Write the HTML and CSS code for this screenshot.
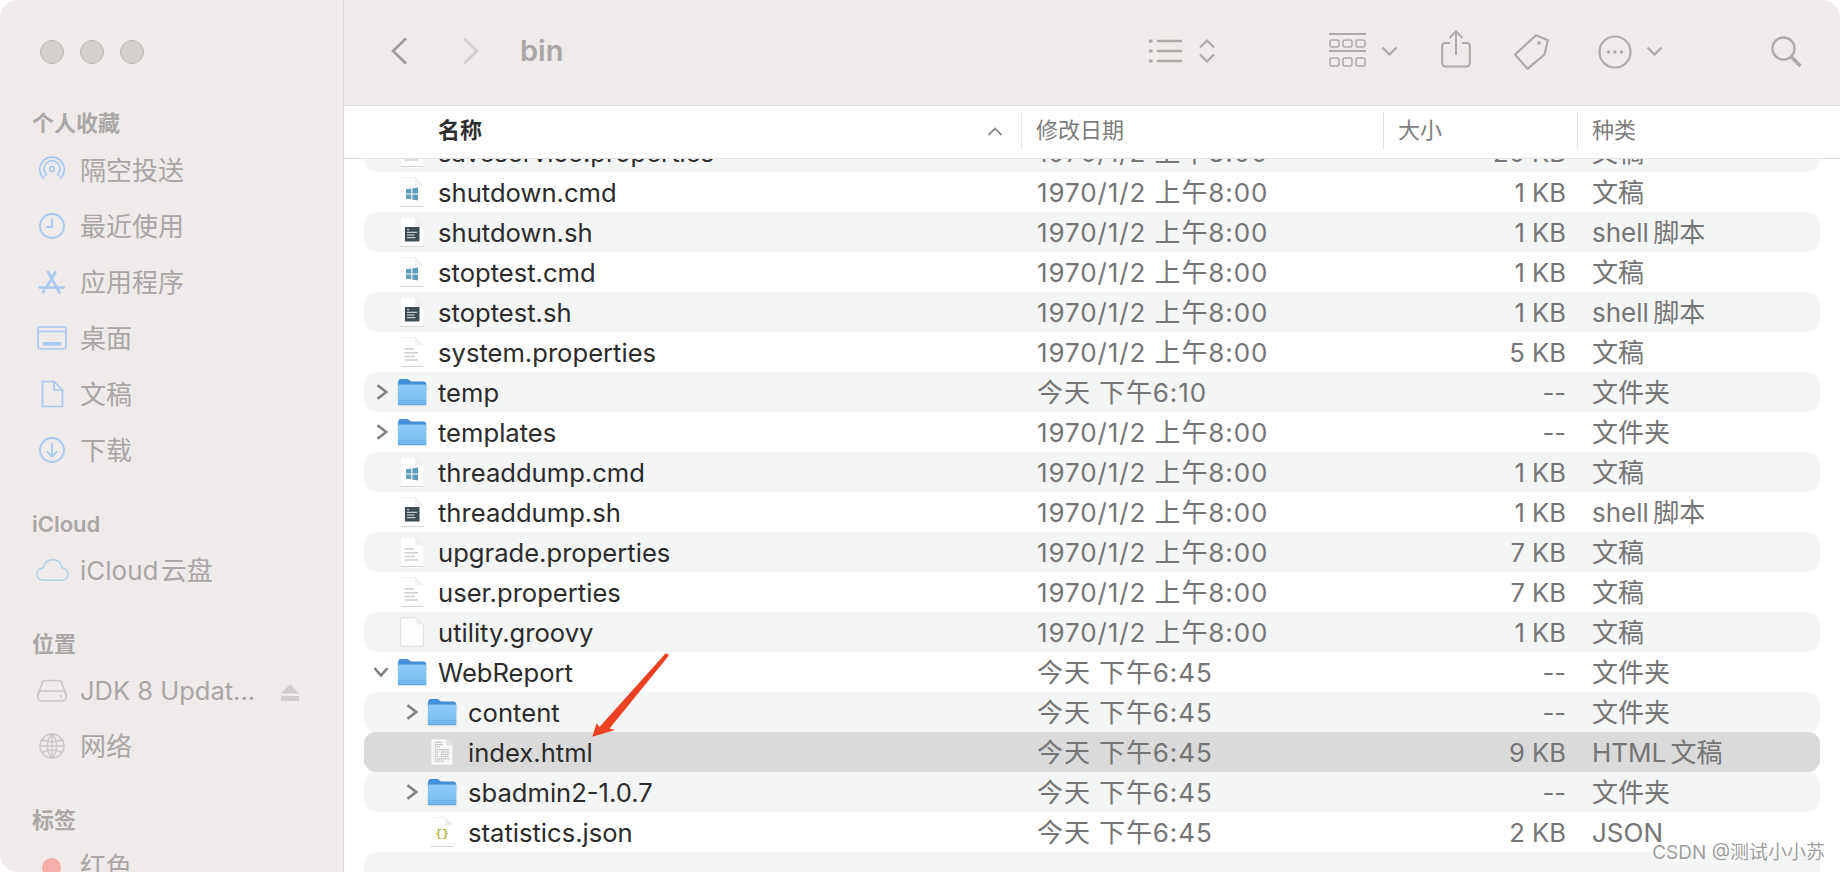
FILE: index.html
```html
<!DOCTYPE html>
<html lang="zh-CN">
<head>
<meta charset="utf-8">
<title>bin</title>
<link rel="stylesheet" href="styles.css">
</head>
<body>
<svg class="sprite" aria-hidden="true">
  <defs>
    <linearGradient id="fb" x1="0" y1="0" x2="0" y2="1">
      <stop offset="0" stop-color="#8ccbf6"/>
      <stop offset="1" stop-color="#74bcf0"/>
    </linearGradient>
    <symbol id="page" viewBox="0 0 24 30">
      <path d="M1 0.5H15L23 8.5V29H1Z" fill="#fff"/>
      <path d="M15 0.5L23 8.5H15Z" fill="#f1f1f1"/>
      <path d="M15 0.5L23 8.5" fill="none" stroke="#e2e2e2" stroke-width=".7"/>
      <path d="M0.5 29.5H23.5" stroke="#d6d6d6" stroke-width="1"/>
      <path d="M0.5 0.3H15" stroke="#e6e6e6" stroke-width=".6"/>
    </symbol>
    <symbol id="win" viewBox="0 0 24 30">
      <use href="#page"/>
      <path d="M6 12.200L11.300 11.400V16.400H6ZM12.400 11.200L18 10.400V16.400H12.400ZM6 17.500H11.300V22.400L6 21.600ZM12.400 17.500H18V23.400L12.400 22.600Z" fill="#5f9cba"/>
    </symbol>
    <symbol id="shell" viewBox="0 0 24 30">
      <use href="#page"/>
      <rect x="5" y="10" width="14.500" height="14.500" fill="#3f4d55"/>
      <path d="M7 12.700H9M7 15.300H17M7 18H14.500M7 20.700H15.500" stroke="#e6e9ea" stroke-width="1"/>
    </symbol>
    <symbol id="text" viewBox="0 0 24 30">
      <use href="#page"/>
      <path d="M4.500 12H14M4.500 15.700H18M4.500 19.400H15M4.500 23H18" stroke="#cfcfcf" stroke-width="1.500"/>
    </symbol>
    <symbol id="blank" viewBox="0 0 24 30">
      <path d="M.7 .7H16.500L23.300 7.500V29.300H.7Z" fill="#fdfdfd" stroke="#dedede" stroke-width="1"/>
      <path d="M16.500 .7L23.300 7.500H16.500Z" fill="#eee"/>
    </symbol>
    <symbol id="html" viewBox="0 0 26 30">
      <path d="M1 .7H17.500L25 8V29.300H1Z" fill="#f6f6f6" stroke="#d2d2d2" stroke-width=".8"/>
      <path d="M17.500 .7L25 8H17.500Z" fill="#e2e2e2"/>
      <path d="M5 4.500H13M5 7H14M5 9.500H11M5 12.500H21M5 15H10M12 15H21M5 17.500H9M12 17.500H21M5 20H10M12 20H20M5 22.500H21M5 25H15" stroke="#a8a8a8" stroke-width="1" stroke-dasharray="1.600 .5"/>
    </symbol>
    <symbol id="json" viewBox="0 0 24 30">
      <use href="#page"/>
      <text x="12" y="20" class="json-glyph" text-anchor="middle">{}</text>
    </symbol>
    <symbol id="folder" viewBox="0 0 30 28">
      <path d="M1 5.500C1 2.500 2 1 4 1H10.500C12 1 12.500 3.500 14.500 3.500H26.500C28 3.500 29.200 4.600 29.200 6.500V12H1Z" fill="#4290d8"/>
      <path d="M1 8.500C1 7 1.600 6.500 3 6.500H27C28.400 6.500 29.200 7 29.200 8.500V25C29.200 26.500 28.400 27 27 27H3C1.600 27 1 26.500 1 25Z" fill="url(#fb)"/>
      <path d="M1 22.500H29.200M1 24.500H29.200" stroke="#66aee4" stroke-width=".8"/>
      <path d="M1 26.500H29.200" stroke="#5b9fd6" stroke-width="1"/>
    </symbol>
    <symbol id="chev-r" viewBox="0 0 12 16"><path d="M1.500 1.200L10.300 8L1.500 14.800" fill="none" stroke="#808080" stroke-width="2.600"/></symbol>
    <symbol id="chev-d" viewBox="0 0 16 12"><path d="M1.500 2L8 9.500L14.500 2" fill="none" stroke="#808080" stroke-width="2.600"/></symbol>
    <symbol id="chev-tool" viewBox="0 0 17 10"><path d="M1.500 1.500L8.500 8.500L15.500 1.500" fill="none" stroke="#aeaaa9" stroke-width="2.400"/></symbol>
  </defs>
</svg>

<div class="window">
  <aside class="sidebar">
    <div class="lights"><span class="light"></span><span class="light"></span><span class="light"></span></div>

    <section class="group">
      <h2 class="group-title">个人收藏</h2>
      <div class="side-item">
        <svg class="side-ic" viewBox="0 0 30 30" fill="none" stroke="#a9c9f0" stroke-width="1.700"><circle cx="15" cy="14" r="2.400" stroke-width="1.500"/><path d="M9.500 19.500A8 8 0 1 1 20.500 19.500"/><path d="M7 23.500A12.200 12.200 0 1 1 23 23.500"/><path d="M9.500 19.500L8 21M20.500 19.500L22 21"/></svg>
        <span>隔空投送</span>
      </div>
      <div class="side-item">
        <svg class="side-ic" viewBox="0 0 30 30" fill="none" stroke="#a9c9f0" stroke-width="1.800"><circle cx="15" cy="15" r="12"/><path d="M15 7.500V16H9"/></svg>
        <span>最近使用</span>
      </div>
      <div class="side-item">
        <svg class="side-ic" viewBox="0 0 30 30" fill="none" stroke="#a9c9f0" stroke-width="2.600" stroke-linecap="round"><path d="M11 5L22.500 25.500M18.500 5L9 21M2.500 20.500H27M6 25.500L7 23.500"/></svg>
        <span>应用程序</span>
      </div>
      <div class="side-item">
        <svg class="side-ic" viewBox="0 0 30 30" fill="none" stroke="#a9c9f0" stroke-width="1.600"><rect x="1" y="4" width="28" height="22" rx="2.500"/><path d="M1 8.500H29"/><rect x="6" y="19" width="18" height="3.500" fill="#a9c9f0" stroke="none"/></svg>
        <span>桌面</span>
      </div>
      <div class="side-item">
        <svg class="side-ic" viewBox="0 0 30 30" fill="none" stroke="#a9c9f0" stroke-width="1.700"><path d="M5.500 2.500H17L25.500 11V27.500H5.500Z" stroke-linejoin="round"/><path d="M17 2.500V11H25.500"/></svg>
        <span>文稿</span>
      </div>
      <div class="side-item">
        <svg class="side-ic" viewBox="0 0 30 30" fill="none" stroke="#a9c9f0" stroke-width="1.800"><circle cx="15" cy="15" r="12"/><path d="M15 8V21M10 16.500L15 21.500L20 16.500"/></svg>
        <span>下载</span>
      </div>
    </section>

    <section class="group">
      <h2 class="group-title">iCloud</h2>
      <div class="side-item">
        <svg class="side-ic cloud" viewBox="0 0 34 24" fill="none" stroke="#add3e8" stroke-width="1.500"><path d="M8 22.500C3.500 22.500 1 19.700 1 16.500C1 13 3.500 10.500 7 10.300C8.500 5 12.500 1.500 17.500 1.500C22.500 1.500 25.800 5 26.800 9.500C30.500 10.500 33 13.200 33 16.500C33 20 30.500 22.500 26.500 22.500Z"/></svg>
        <span class="tight">iCloud 云盘</span>
      </div>
    </section>

    <section class="group">
      <h2 class="group-title">位置</h2>
      <div class="side-item">
        <svg class="side-ic" viewBox="0 0 30 30" fill="none" stroke="#cac7c6" stroke-width="1.600"><path d="M1 20L5 8C5.500 6.500 6.500 5.500 8 5.500H22C23.500 5.500 24.500 6.500 25 8L29 20"/><rect x="1" y="16" width="28" height="10" rx="3.500"/><circle cx="24" cy="21" r="1.200" fill="#cac7c6" stroke="none"/></svg>
        <span class="latin">JDK 8 Updat...</span>
        <svg class="eject" viewBox="0 0 18 18"><path d="M9 0L18 9.500H0Z" fill="#d0cdcc"/><rect y="12" width="18" height="5" fill="#d0cdcc"/></svg>
      </div>
      <div class="side-item">
        <svg class="side-ic" viewBox="0 0 30 30" fill="none" stroke="#cac7c6" stroke-width="1.400"><circle cx="15" cy="15" r="12"/><path d="M3 15H27M5 8.500C11 11.500 19 11.500 25 8.500M5 21.500C11 18.500 19 18.500 25 21.500M15 3C9 9 9 21 15 27M15 3C21 9 21 21 15 27M15 3V27"/></svg>
        <span>网络</span>
      </div>
    </section>

    <section class="group">
      <h2 class="group-title">标签</h2>
      <div class="side-item">
        <span class="tag-dot"></span>
        <span>红色</span>
      </div>
    </section>
  </aside>

  <main class="main">
    <header class="toolbar">
      <svg class="nav" viewBox="0 0 16 28"><path d="M15 1.500L2 14L15 26.500" fill="none" stroke="#9d9998" stroke-width="2.600"/></svg>
      <svg class="nav next" viewBox="0 0 16 28"><path d="M1 1.500L14 14L1 26.500" fill="none" stroke="#d3d0cf" stroke-width="2.600"/></svg>
      <h1 class="folder-title">bin</h1>
      <div class="tools">
        <svg class="t-list" viewBox="0 0 33 26" fill="none" stroke="#aeaaa9" stroke-width="2.400"><path d="M8 3H33M8 13H33M8 23H33"/><path d="M0 3H3.500M0 13H3.500M0 23H3.500" stroke-width="3"/></svg>
        <svg class="t-updown" viewBox="0 0 18 26" fill="none" stroke="#aeaaa9" stroke-width="2.200"><path d="M2 9.500L9 2.500L16 9.500M2 16.500L9 23.500L16 16.500"/></svg>
        <svg class="t-grid" viewBox="0 0 37 36" fill="none" stroke="#aeaaa9"><path d="M0 1H37" stroke-width="2"/><path d="M0 18H37" stroke-width="2"/><g stroke-width="1.500"><rect x="1" y="7" width="9" height="7" rx="2"/><rect x="14" y="7" width="9" height="7" rx="2"/><rect x="27" y="7" width="9" height="7" rx="2"/><rect x="1" y="25" width="9" height="8" rx="2"/><rect x="14" y="25" width="9" height="8" rx="2"/><rect x="27" y="25" width="9" height="8" rx="2"/></g></svg>
        <svg class="t-chev" viewBox="0 0 17 10"><use href="#chev-tool"/></svg>
        <svg class="t-share" viewBox="0 0 30 38" fill="none" stroke="#aeaaa9" stroke-width="2"><path d="M9 13H4C2.500 13 1.200 14 1.200 16V33C1.200 35 2.500 36.500 4 36.500H26C27.500 36.500 28.800 35 28.800 33V16C28.800 14 27.500 13 26 13H21"/><path d="M15 25V2M8.500 8L15 1.500L21.500 8"/></svg>
        <svg class="t-tag" viewBox="0 0 37 38" fill="none" stroke="#aeaaa9" stroke-width="2.200" stroke-linejoin="round"><path d="M23 2.200L34.800 7.200L31.500 21.500L14.500 35.800L2 21.500Z"/><circle cx="26" cy="10" r="1.800" fill="#aeaaa9" stroke="none"/></svg>
        <svg class="t-more" viewBox="0 0 34 34" fill="none" stroke="#aeaaa9" stroke-width="2.200"><circle cx="17" cy="17" r="15.500"/><g fill="#aeaaa9" stroke="none"><circle cx="10.500" cy="17" r="1.700"/><circle cx="17" cy="17" r="1.700"/><circle cx="23.500" cy="17" r="1.700"/></g></svg>
        <svg class="t-chev close" viewBox="0 0 17 10"><use href="#chev-tool"/></svg>
        <svg class="t-search" viewBox="0 0 31 31" fill="none" stroke="#aeaaa9" stroke-width="2.400"><circle cx="12.500" cy="12.500" r="11"/><path d="M20 20.500L29.500 30" stroke-width="3.600"/></svg>
      </div>
    </header>

    <div class="col-head">
      <div class="col col-name">名称<svg class="sort" viewBox="0 0 16 9"><path d="M1.500 8L8 1.500L14.500 8" fill="none" stroke="#8c8c8c" stroke-width="1.800"/></svg></div>
      <div class="col col-sep">修改日期</div>
      <div class="col col-sep">大小</div>
      <div class="col col-sep">种类</div>
    </div>

    <div class="list">
      <div class="row band"><div class="name"><svg class="file"><use href="#text"/></svg><span class="fname">saveservice.properties</span></div><div class="date">1970/1/2 上午8:00</div><div class="size">20 KB</div><div class="kind">文稿</div></div>
      <div class="row"><div class="name"><svg class="file"><use href="#win"/></svg><span class="fname">shutdown.cmd</span></div><div class="date">1970/1/2 上午8:00</div><div class="size">1 KB</div><div class="kind">文稿</div></div>
      <div class="row band"><div class="name"><svg class="file"><use href="#shell"/></svg><span class="fname">shutdown.sh</span></div><div class="date">1970/1/2 上午8:00</div><div class="size">1 KB</div><div class="kind">shell 脚本</div></div>
      <div class="row"><div class="name"><svg class="file"><use href="#win"/></svg><span class="fname">stoptest.cmd</span></div><div class="date">1970/1/2 上午8:00</div><div class="size">1 KB</div><div class="kind">文稿</div></div>
      <div class="row band"><div class="name"><svg class="file"><use href="#shell"/></svg><span class="fname">stoptest.sh</span></div><div class="date">1970/1/2 上午8:00</div><div class="size">1 KB</div><div class="kind">shell 脚本</div></div>
      <div class="row"><div class="name"><svg class="file"><use href="#text"/></svg><span class="fname">system.properties</span></div><div class="date">1970/1/2 上午8:00</div><div class="size">5 KB</div><div class="kind">文稿</div></div>
      <div class="row band"><div class="name"><svg class="disc"><use href="#chev-r"/></svg><svg class="dir"><use href="#folder"/></svg><span class="fname">temp</span></div><div class="date">今天 下午6:10</div><div class="size">--</div><div class="kind">文件夹</div></div>
      <div class="row"><div class="name"><svg class="disc"><use href="#chev-r"/></svg><svg class="dir"><use href="#folder"/></svg><span class="fname">templates</span></div><div class="date">1970/1/2 上午8:00</div><div class="size">--</div><div class="kind">文件夹</div></div>
      <div class="row band"><div class="name"><svg class="file"><use href="#win"/></svg><span class="fname">threaddump.cmd</span></div><div class="date">1970/1/2 上午8:00</div><div class="size">1 KB</div><div class="kind">文稿</div></div>
      <div class="row"><div class="name"><svg class="file"><use href="#shell"/></svg><span class="fname">threaddump.sh</span></div><div class="date">1970/1/2 上午8:00</div><div class="size">1 KB</div><div class="kind">shell 脚本</div></div>
      <div class="row band"><div class="name"><svg class="file"><use href="#text"/></svg><span class="fname">upgrade.properties</span></div><div class="date">1970/1/2 上午8:00</div><div class="size">7 KB</div><div class="kind">文稿</div></div>
      <div class="row"><div class="name"><svg class="file"><use href="#text"/></svg><span class="fname">user.properties</span></div><div class="date">1970/1/2 上午8:00</div><div class="size">7 KB</div><div class="kind">文稿</div></div>
      <div class="row band"><div class="name"><svg class="file"><use href="#blank"/></svg><span class="fname">utility.groovy</span></div><div class="date">1970/1/2 上午8:00</div><div class="size">1 KB</div><div class="kind">文稿</div></div>
      <div class="row"><div class="name"><svg class="disc open"><use href="#chev-d"/></svg><svg class="dir"><use href="#folder"/></svg><span class="fname">WebReport</span></div><div class="date">今天 下午6:45</div><div class="size">--</div><div class="kind">文件夹</div></div>
      <div class="row band"><div class="name sub"><svg class="disc"><use href="#chev-r"/></svg><svg class="dir"><use href="#folder"/></svg><span class="fname">content</span></div><div class="date">今天 下午6:45</div><div class="size">--</div><div class="kind">文件夹</div></div>
      <div class="row selected"><div class="name sub"><svg class="file"><use href="#html"/></svg><span class="fname">index.html</span></div><div class="date">今天 下午6:45</div><div class="size">9 KB</div><div class="kind">HTML 文稿</div></div>
      <div class="row band"><div class="name sub"><svg class="disc"><use href="#chev-r"/></svg><svg class="dir"><use href="#folder"/></svg><span class="fname">sbadmin2-1.0.7</span></div><div class="date">今天 下午6:45</div><div class="size">--</div><div class="kind">文件夹</div></div>
      <div class="row"><div class="name sub"><svg class="file"><use href="#json"/></svg><span class="fname">statistics.json</span></div><div class="date">今天 下午6:45</div><div class="size">2 KB</div><div class="kind">JSON</div></div>
      <div class="row band"></div>
    </div>
  </main>

  <svg class="arrow" viewBox="0 0 80 90"><path d="M75 2C76.500 .5 79 2.500 78.500 4L19.500 76.500L25 78L2.300 84.700L6.700 71.300L9.500 75Z" fill="#ee4023"/></svg>
  <div class="watermark">CSDN @测试小小苏</div>
</div>
</body>
</html>
```

FILE: styles.css
```css
* { box-sizing: border-box; }
html, body { margin: 0; height: 100%; background: #fff; }
body {
  font-family: Inter, "Noto Sans CJK SC", sans-serif;
  overflow: hidden;
}
.sprite { position: absolute; width: 0; height: 0; }
.json-glyph { font: 700 11px "Liberation Mono", monospace; fill: #b5b53c; }

.window {
  position: relative;
  display: flex;
  width: 1840px;
  height: 872px;
  border-radius: 18px;
  overflow: hidden;
  background: #fff;
}

/* Sidebar */
.sidebar {
  flex: 0 0 344px;
  height: 872px;
  background: #eeebea;
  border-right: 1px solid #d9d6d5;
  color: #a9a6a5;
  overflow: hidden;
}
.lights { display: flex; gap: 16px; padding: 40px 0 0 40px; height: 106px; }
.light {
  width: 24px; height: 24px; border-radius: 50%;
  background: #d4d0ce; border: 1px solid #b9b5b3;
}
.group { margin-bottom: 28px; }
.group-title {
  margin: 0; padding-left: 32px;
  height: 36px; line-height: 35px;
  font-size: 22px; font-weight: 600;
  color: #aaa7a6;
}
.group + .group .group-title { line-height: 36px; }
.side-item {
  position: relative;
  display: flex; align-items: center;
  height: 56px; padding: 2px 0 0 80px;
  font-size: 26px; line-height: 54px;
  white-space: nowrap;
}
.tight { word-spacing: -5px; }
.latin { font-size: 25.500px; }
.side-ic {
  position: absolute; left: 37px; top: 13px;
  width: 30px; height: 30px;
}
.side-ic.cloud { left: 36px; top: 16px; width: 33px; height: 24px; }
.eject { position: absolute; left: 281px; top: 22px; width: 18px; height: 18px; }
.tag-dot {
  position: absolute; left: 42px; top: 20px;
  width: 19px; height: 19px; border-radius: 50%;
  background: #f5aeaa;
}

/* Main */
.main { flex: 1; display: flex; flex-direction: column; min-width: 0; height: 872px; }
.toolbar {
  flex: 0 0 105px;
  display: flex; align-items: center;
  padding: 0 38px 3px 47px;
  background: #eeebea;
}
.nav { width: 16px; height: 28px; }
.nav.next { margin-left: 56px; }
.folder-title {
  margin: 0 0 0 41px;
  font-size: 29px; font-weight: 600; line-height: 40px;
  color: #aaa6a5;
}
.tools { margin-left: auto; display: flex; align-items: center; }
.t-list { width: 33px; height: 26px; }
.t-updown { width: 18px; height: 26px; margin-left: 16px; }
.t-grid { width: 37px; height: 36px; margin-left: 113px; }
.t-chev { width: 17px; height: 10px; margin-left: 15px; }
.t-share { width: 30px; height: 38px; margin-left: 43px; margin-top: -4px; }
.t-tag { width: 37px; height: 38px; margin-left: 42px; margin-top: 2px; }
.t-more { width: 34px; height: 34px; margin-left: 48px; margin-top: 2px; }
.t-chev.close { margin-left: 14px; }
.t-search { width: 31px; height: 31px; margin-left: 108px; }

.col-head {
  position: relative; z-index: 1;
  flex: 0 0 54px;
  display: grid;
  grid-template-columns: 677px 362px 194px 1fr;
  align-items: center;
  padding-top: 6px; padding-bottom: 8px;
  background: #fff;
  border-top: 1px solid #dedcdb;
  border-bottom: 1px solid #e2e2e2;
  font-size: 22px; line-height: 36px;
  color: #7c7c7c;
}
.col { height: 38px; }
.col-name {
  position: relative;
  padding-left: 94px;
  font-weight: 600; color: #2e2e2e;
}
.col-sep { border-left: 1px solid #e4e4e4; padding-left: 14px; }
.sort { position: absolute; left: 643px; top: 15px; width: 16px; height: 9px; }

.list {
  flex: 1; margin-top: -27px; padding: 0 20px;
  overflow: hidden;
  font-size: 25.600px; color: #757575;
}
.row {
  display: grid;
  grid-template-columns: 673px 300px 229px 254px;
  grid-template-rows: 40px;
  height: 40px; line-height: 42px;
  border-radius: 12px;
  white-space: nowrap;
}
.band { background: #f4f5f5; }
.selected { background: #dadada; }
.name {
  position: relative;
  padding-left: 74px;
  color: #2b2b2b;
}
.name.sub { padding-left: 104px; }
.date { font-size: 26px; letter-spacing: .9px; }
.size { text-align: right; }
.kind { padding-left: 26px; font-size: 26px; word-spacing: -3px; }

.file { position: absolute; left: 36px; top: 5px; width: 24px; height: 30px; }
.dir {
  position: absolute; left: 33px; top: 6px; width: 30px; height: 28px;
  filter: drop-shadow(0 1px 1px rgba(0,0,0,.15));
}
.disc { position: absolute; left: 12px; top: 12px; width: 12px; height: 16px; }
.disc.open { left: 9px; top: 14px; width: 16px; height: 12px; }
.sub .file { left: 66px; }
.sub .dir { left: 63px; }
.sub .disc { left: 42px; }

/* Overlays */
.arrow { position: absolute; left: 590px; top: 652px; width: 80px; height: 90px; }
.watermark {
  position: absolute; right: 15px; top: 840px;
  font-size: 19px; line-height: 26px;
  color: rgba(120,120,120,.72);
  text-shadow: 0 0 2px rgba(255,255,255,.9);
  white-space: nowrap;
}
```
